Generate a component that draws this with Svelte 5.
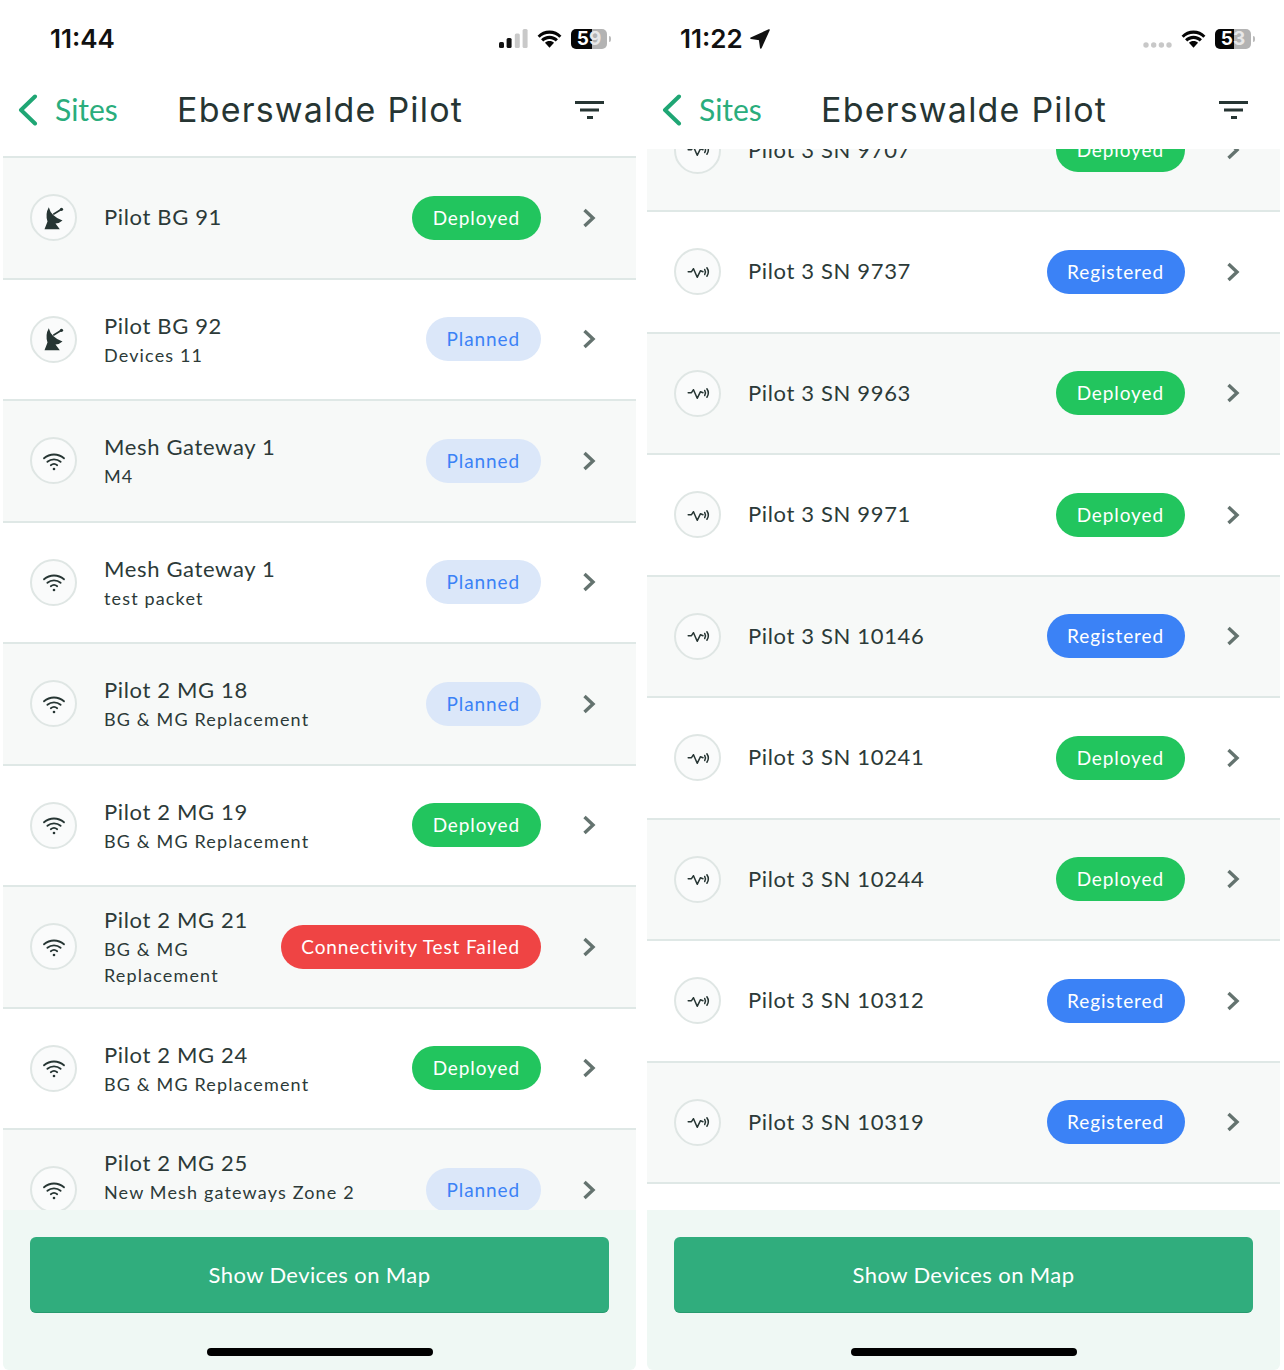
<script>
	const left = [
		{ kind: 'dish', name: 'Pilot BG 91', status: 'Deployed' },
		{ kind: 'dish', name: 'Pilot BG 92', sub: 'Devices 11', status: 'Planned' },
		{ kind: 'wifi', name: 'Mesh Gateway 1', sub: 'M4', status: 'Planned' },
		{ kind: 'wifi', name: 'Mesh Gateway 1', sub: 'test packet', status: 'Planned' },
		{ kind: 'wifi', name: 'Pilot 2 MG 18', sub: 'BG & MG Replacement', status: 'Planned' },
		{ kind: 'wifi', name: 'Pilot 2 MG 19', sub: 'BG & MG Replacement', status: 'Deployed' },
		{ kind: 'wifi', name: 'Pilot 2 MG 21', sub: 'BG & MG Replacement', status: 'Connectivity Test Failed' },
		{ kind: 'wifi', name: 'Pilot 2 MG 24', sub: 'BG & MG Replacement', status: 'Deployed' },
		{ kind: 'wifi', name: 'Pilot 2 MG 25', sub: 'New Mesh gateways Zone 2', status: 'Planned', lifted: true }
	];

	const right = [
		['9707', 'Deployed'],
		['9737', 'Registered'],
		['9963', 'Deployed'],
		['9971', 'Deployed'],
		['10146', 'Registered'],
		['10241', 'Deployed'],
		['10244', 'Deployed'],
		['10312', 'Registered'],
		['10319', 'Registered']
	].map(([sn, status]) => ({ kind: 'pulse', name: `Pilot 3 SN ${sn}`, status }));

	const phones = [
		{ time: '11:44', level: 59, rows: left, located: false, scrolled: false },
		{ time: '11:22', level: 53, rows: right, located: true, scrolled: true }
	];

	const badgeClass = (status) => status.split(' ')[0].toLowerCase();
</script>

{#snippet icon(kind)}
	{#if kind === 'dish'}
		<svg class="glyph" viewBox="0 0 24 24" width="24" height="24">
			<path class="solid" d="M6.8 1.3 Q9 10.5 20.5 14.5 Q17.5 17.3 13.5 17.5 L17.8 23.3 L2.5 23.3 L5.5 15.5 Q3 8 6.8 1.3 Z" />
			<path class="line" d="M11.8 8 L19.5 3.3" />
			<circle class="solid" cx="19.5" cy="3.3" r="1.6" />
		</svg>
	{:else if kind === 'wifi'}
		<svg class="glyph" viewBox="0 0 24 24" width="24" height="24">
			<path class="line thin" d="M2 9.3 C7.8 4.2 16.2 4.2 22 9.3" />
			<path class="line thin" d="M5.4 12.8 C9.2 9.5 14.8 9.5 18.6 12.8" />
			<path class="line thin" d="M8.8 16.2 C10.8 14.6 13.2 14.6 15.2 16.2" />
			<circle class="solid" cx="12" cy="20" r="1.3" />
		</svg>
	{:else}
		<svg class="glyph" viewBox="0 0 24 24" width="24" height="24">
			<path class="line pulse" d="M2.2 11.7 H5.5 L7.5 8.7 L11.2 17.3 L14.5 10.7 L17 11.7" />
			<path class="line pulse" d="M18.7 9.5 Q20.3 12 18.7 14.5" />
			<path class="line pulse" d="M20.9 7.8 Q23.8 12 20.9 16.2" />
		</svg>
	{/if}
{/snippet}

<main class="screens">
	{#each phones as phone}
		<section class="phone">
			<header class="top">
				<div class="status" class:located={phone.located}>
					<div class="clock">
						<span class="time">{phone.time}</span>
						{#if phone.located}
							<svg viewBox="0 0 22 22" width="22" height="22"><path d="M20 2 L2 10.2 L10.6 11.4 L11.8 20 Z" /></svg>
						{/if}
					</div>
					<div class="indicators">
						{#if phone.located}
							<svg class="dots" viewBox="0 0 29 6" width="29" height="6">
								<circle cx="3" cy="3" r="2.7" /><circle cx="10.7" cy="3" r="2.7" /><circle cx="18.4" cy="3" r="2.7" /><circle cx="26" cy="3" r="2.7" />
							</svg>
						{:else}
							<svg class="bars" viewBox="0 0 29 19" width="29" height="19">
								<rect class="on" x="0" y="13" width="5" height="6" rx="1.5" />
								<rect class="on" x="7.6" y="9" width="5" height="10" rx="1.5" />
								<rect x="15.8" y="4.5" width="5" height="14.5" rx="1.5" />
								<rect x="23.6" y="0" width="5" height="19" rx="1.5" />
							</svg>
						{/if}
						<svg class="signal" viewBox="0 0 26 20" width="25" height="20">
							<path d="M13 4.6 C17 4.6 20.6 6.2 23.2 8.8 L25.4 6.5 C22.2 3.2 17.8 1.2 13 1.2 C8.2 1.2 3.8 3.2 .6 6.5 L2.8 8.8 C5.4 6.2 9 4.6 13 4.6 Z" />
							<path d="M13 10 C15.5 10 17.8 11 19.5 12.6 L21.8 10.3 C19.5 8 16.4 6.7 13 6.7 C9.6 6.7 6.5 8 4.2 10.3 L6.5 12.6 C8.2 11 10.5 10 13 10 Z" />
							<path d="M13 12 C11 12 9.5 12.7 8.3 13.9 L13 19 L17.7 13.9 C16.5 12.7 15 12 13 12 Z" />
						</svg>
						<div class="battery">
							<div class="cell" style="--fill: {phone.level}%"><span>{Math.floor(phone.level / 10)}</span><span class="units">{phone.level % 10}</span></div>
							<i></i>
						</div>
					</div>
				</div>
				<nav class="bar">
					<div class="back">
						<svg viewBox="0 0 20 32" width="20" height="32"><path d="M17 2.5 L3 16 L17 29.5" /></svg>
						<span>Sites</span>
					</div>
					<h1>Eberswalde Pilot</h1>
					<svg class="filter" viewBox="0 0 29 20" width="29" height="20">
						<rect x="0" y="0" width="29" height="3" />
						<rect x="5" y="7.5" width="19" height="3" />
						<rect x="12" y="15" width="6" height="3" />
					</svg>
				</nav>
			</header>

			<div class="viewport">
				<ul class="rows" class:scrolled={phone.scrolled}>
					{#each phone.rows as row}
						<li class="row">
							<span class="disc">{@render icon(row.kind)}</span>
							<div class="label" class:lifted={row.lifted}>
								<div class="name">{row.name}</div>
								{#if row.sub}<div class="sub">{row.sub}</div>{/if}
							</div>
							<span class="badge {badgeClass(row.status)}">{row.status}</span>
							<svg class="chev" viewBox="0 0 14 20" width="14" height="20"><path d="M2.5 2 L11 10 L2.5 18" /></svg>
						</li>
					{/each}
				</ul>
			</div>

			<footer class="foot">
				<button class="map">Show Devices on Map</button>
				<div class="home"></div>
			</footer>
		</section>
	{/each}
</main>

<style>
	:global(body) {
		margin: 0;
		background: #fff;
	}

	.screens {
		display: grid;
		grid-template-columns: 633px 633px;
		gap: 11px;
		padding-left: 3px;
		width: 1281px;
		height: 1370px;
		overflow: hidden;
		font-family: Lato, "Noto Sans", sans-serif;
		color: #2c3a38;
	}

	.phone {
		display: flex;
		flex-direction: column;
		height: 1370px;
		min-width: 0;
	}

	.top {
		flex: none;
		height: 149px;
		background: #fff;
	}

	.status {
		display: flex;
		justify-content: space-between;
		align-items: center;
		height: 77px;
		padding: 0 25px 0 47px;
		box-sizing: border-box;
	}
	.status.located {
		padding-left: 33px;
	}

	.clock {
		display: flex;
		align-items: center;
		gap: 6px;
		color: #111;
	}
	.clock svg {
		fill: #111;
		stroke: #111;
		stroke-width: 1.6;
		stroke-linejoin: round;
	}
	.time {
		font-family: Inter, sans-serif;
		font-weight: 600;
		font-size: 26px;
	}

	.indicators {
		display: flex;
		align-items: center;
		gap: 9px;
		height: 24px;
	}
	.bars {
		fill: #c9c9c9;
	}
	.bars .on {
		fill: #111;
	}
	.dots {
		fill: #c8c8c8;
		margin-top: 13px;
	}
	.signal {
		fill: #050505;
	}

	.battery {
		display: flex;
		align-items: center;
		gap: 2px;
	}
	.cell {
		display: flex;
		justify-content: center;
		width: 36px;
		height: 20px;
		border-radius: 5px;
		background: linear-gradient(90deg, #060606 var(--fill), #b3b3b3 var(--fill));
		color: #fff;
		font-family: Inter, sans-serif;
		font-weight: 700;
		font-size: 19px;
		line-height: 20px;
	}
	.units {
		color: #e8e8e8;
	}
	.battery i {
		width: 2px;
		height: 6px;
		border-radius: 0 2px 2px 0;
		background: #bbb;
	}

	.bar {
		display: flex;
		align-items: center;
		height: 62px;
		padding: 0 32px 0 15px;
		margin-top: 2px;
	}
	.back {
		display: flex;
		align-items: center;
		gap: 17px;
		width: 159px;
		color: #2aad7c;
		font-size: 30px;
	}
	.back span {
		margin-top: -2px;
	}
	.back svg {
		fill: none;
		stroke: #1fa674;
		stroke-width: 4;
		stroke-linecap: round;
		stroke-linejoin: round;
	}
	h1 {
		flex: 1;
		margin: -2px 0 0;
		font-family: Inter, sans-serif;
		font-weight: 400;
		font-size: 34px;
		letter-spacing: 1.2px;
		color: #263533;
	}
	.filter {
		fill: #263533;
		margin-top: 2px;
	}

	.viewport {
		flex: 1;
		min-height: 0;
		overflow: hidden;
	}
	.rows {
		list-style: none;
		margin: 0;
		padding: 9px 0 0;
		background: #fff;
	}
	.rows:not(.scrolled) {
		background-image: linear-gradient(#dfe8e6, #dfe8e6);
		background-size: 100% 2px;
		background-position: 0 7px;
		background-repeat: no-repeat;
	}
	.rows.scrolled {
		padding-top: 0;
		margin-top: -58.5px;
	}

	.row {
		display: flex;
		align-items: center;
		box-sizing: border-box;
		height: 121.5px;
		padding: 0 40px 0 27px;
		border-bottom: 2px solid #dfe8e6;
	}
	.row:nth-child(odd) {
		background: #f7f9f8;
	}

	.disc {
		flex: none;
		display: flex;
		align-items: center;
		justify-content: center;
		width: 47px;
		height: 47px;
		box-sizing: border-box;
		border: 2px solid #dfe6e4;
		border-radius: 50%;
		background: #fafbfb;
	}
	.glyph {
		display: block;
	}
	.solid {
		fill: #263533;
	}
	.line {
		fill: none;
		stroke: #263533;
		stroke-width: 1.6;
		stroke-linecap: round;
		stroke-linejoin: round;
	}
	.thin {
		stroke-width: 1.8;
	}
	.pulse {
		stroke-width: 1.5;
	}

	.label {
		flex: 1;
		min-width: 0;
		margin-left: 27px;
	}
	.label.lifted {
		padding-bottom: 26px;
	}
	.name {
		font-size: 22px;
		line-height: 30px;
		letter-spacing: 0.65px;
		margin-bottom: 1px;
	}
	.sub {
		font-size: 18px;
		line-height: 26px;
		letter-spacing: 1.15px;
	}

	.badge {
		flex: none;
		box-sizing: border-box;
		height: 44px;
		padding: 0 21px 0 20.5px;
		border-radius: 22px;
		font-size: 19px;
		line-height: 43px;
		letter-spacing: 0.9px;
		color: #fff;
		margin-left: 8px;
	}
	.deployed {
		background: #22c55e;
	}
	.registered {
		background: #3b82f6;
	}
	.planned {
		background: #dbe7f9;
		color: #3b82f6;
	}
	.connectivity {
		background: #ef4444;
	}

	.chev {
		flex: none;
		margin-left: 41px;
		fill: none;
		stroke: #64736f;
		stroke-width: 3.4;
	}

	.foot {
		flex: none;
		display: flex;
		flex-direction: column;
		align-items: center;
		height: 160px;
		padding: 27px 27px 0;
		box-sizing: border-box;
		background: #eff8f4;
		border-radius: 0 0 6px 6px;
	}
	.map {
		width: 100%;
		height: 76px;
		border: 0;
		border-bottom: 1px solid #269a6e;
		border-radius: 6px;
		background: #30ad7d;
		color: #fff;
		font-family: Lato, sans-serif;
		font-size: 22px;
		letter-spacing: 0.4px;
	}
	.home {
		width: 226px;
		height: 8px;
		margin-top: 35px;
		border-radius: 4px;
		background: #000;
	}
</style>
